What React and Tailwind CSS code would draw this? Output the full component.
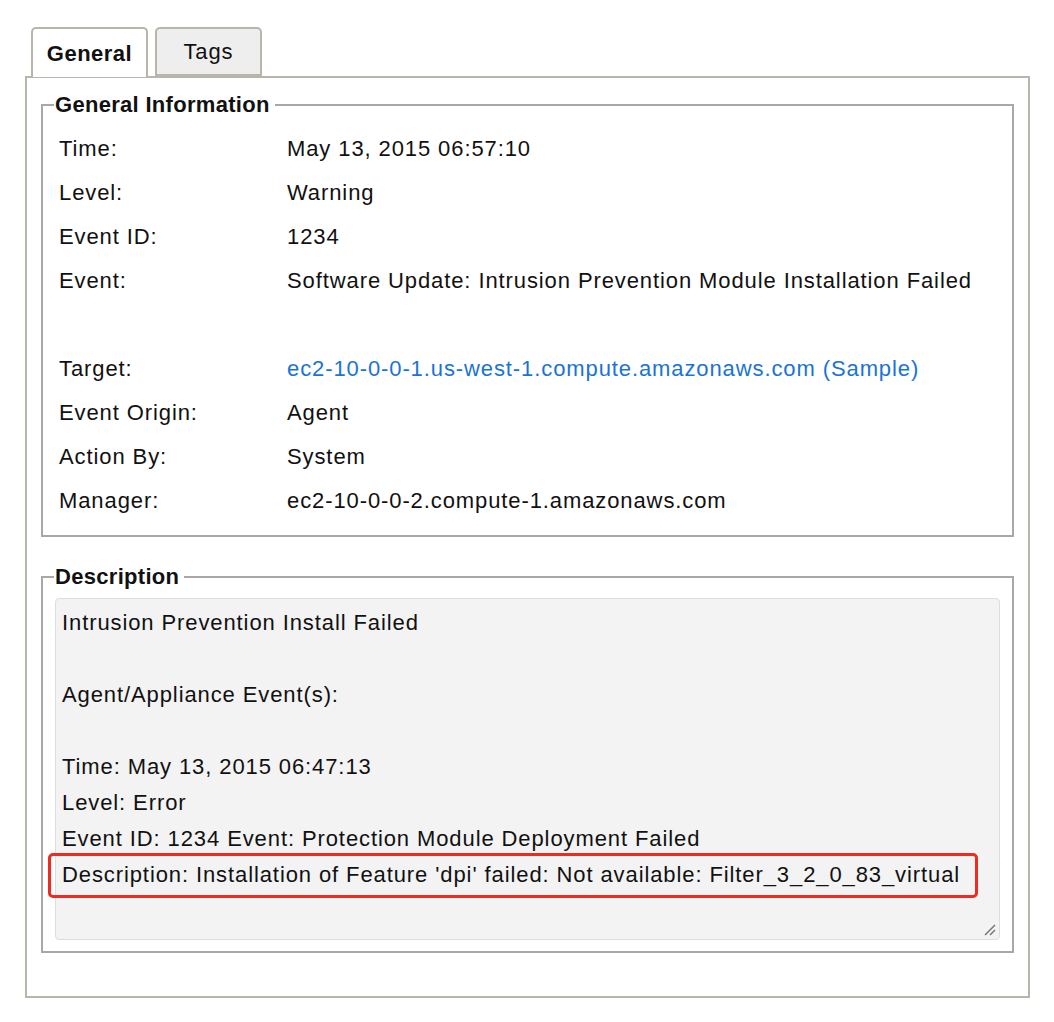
export default function App() {
  const rows = [
    ["Time:", "May 13, 2015 06:57:10"],
    ["Level:", "Warning"],
    ["Event ID:", "1234"],
    ["Event:", "Software Update: Intrusion Prevention Module Installation Failed", true],
    ["Target:", "ec2-10-0-0-1.us-west-1.compute.amazonaws.com (Sample)", false, true],
    ["Event Origin:", "Agent"],
    ["Action By:", "System"],
    ["Manager:", "ec2-10-0-0-2.compute-1.amazonaws.com"],
  ];
  return (
    <div className="w-[1054px] h-[1022px] bg-white text-[#111] text-[22px] tracking-[0.9px]" style={{ fontFamily: '"Liberation Sans", Arial, sans-serif' }}>
      <div className="pt-[27px] pl-[25px] w-[1030px]">
        <div className="flex gap-[7px] pl-[6px] relative z-10">
          <div className="w-[117px] h-[50px] border-2 border-b-0 border-[#b8b5aa] rounded-t-[5px] bg-white font-bold flex items-center justify-center tracking-[0.5px]">General</div>
          <div className="w-[107px] h-[49px] border-2 border-[#b8b5aa] rounded-t-[5px] bg-[#eeeeee] flex items-center justify-center">Tags</div>
        </div>
        <div className="-mt-[1px] border-2 border-[#b8b5aa] h-[922px] px-[14px] pt-[14px]">
          <fieldset className="border-2 border-[#a8a8a8] h-[445px] px-[16px] m-0">
            <legend className="font-bold pl-[1px] pr-[5px] -ml-[5px] leading-[26px] tracking-[0.3px]">General Information</legend>
            <div className="pt-[9px]">
              {rows.map(([l, v, tall, link]) => (
                <div key={l} className={`flex leading-[44px] ${tall ? "h-[88px]" : "h-[44px]"}`}>
                  <div className="w-[228px] shrink-0">{l}</div>
                  <div className={link ? "text-[#1a73d9]" : ""}>{v}</div>
                </div>
              ))}
            </div>
          </fieldset>
          <fieldset className="border-2 border-[#a8a8a8] h-[389px] px-[12px] pb-[10px] mt-[27px] m-0">
            <legend className="font-bold pl-[1px] pr-[5px] -ml-[1px] leading-[26px] tracking-[0.3px]">Description</legend>
            <div className="relative h-[342px] mt-[8px] bg-[#f3f3f3] border border-[#dddddd] rounded-[4px] px-[6px] pt-[6px] leading-[36px]">
              <div>Intrusion Prevention Install Failed</div>
              <div className="h-[36px]" />
              <div>Agent/Appliance Event(s):</div>
              <div className="h-[36px]" />
              <div>Time: May 13, 2015 06:47:13</div>
              <div>Level: Error</div>
              <div>Event ID: 1234 Event: Protection Module Deployment Failed</div>
              <div className="relative">
                Description: Installation of Feature 'dpi' failed: Not available: Filter_3_2_0_83_virtual
                <div className="absolute left-[-14px] top-[-4px] w-[930px] h-[45px] border-[3px] border-[#f02a1e] rounded-[5px]" />
              </div>
              <svg className="absolute right-[3px] bottom-[3px]" width="14" height="14" viewBox="0 0 14 14">
                <path d="M3 13 L13 3 M8 13 L13 8" stroke="#777" strokeWidth="1.5" />
              </svg>
            </div>
          </fieldset>
        </div>
      </div>
    </div>
  );
}
